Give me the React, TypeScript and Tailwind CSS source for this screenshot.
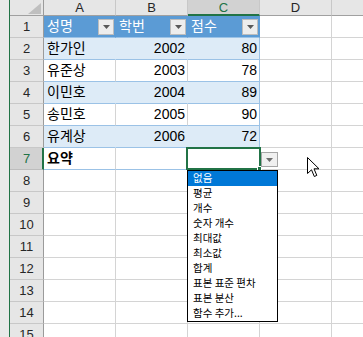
import React from "react";

const FONT = "font-['Liberation_Sans','Noto_Sans_CJK_KR',sans-serif]";

const people = [
  { name: "한가인", id: "2002", score: "80" },
  { name: "유준상", id: "2003", score: "78" },
  { name: "이민호", id: "2004", score: "89" },
  { name: "송민호", id: "2005", score: "90" },
  { name: "유계상", id: "2006", score: "72" },
];

const options = [
  "없음",
  "평균",
  "개수",
  "숫자 개수",
  "최대값",
  "최소값",
  "합계",
  "표본 표준 편차",
  "표본 분산",
  "함수 추가...",
];

const Arrow = ({ color = "#595959" }: { color?: string }) => (
  <svg width="7" height="4" viewBox="0 0 7 4">
    <polygon points="0,0 7,0 3.5,4" fill={color} />
  </svg>
);

const FilterButton = () => (
  <div className="mr-px flex h-[16px] w-[16px] items-center justify-center border border-[#bdbdbd] bg-[#ededed]">
    <Arrow />
  </div>
);

function RowHead({ n, active }: { n: number; active?: boolean }) {
  return (
    <div
      className={
        active
          ? "flex w-[34px] shrink-0 items-center justify-center border-r-2 border-b border-r-[#217346] border-b-[#bdbdbd] bg-[#d2d2d2] pl-px text-[13px] text-[#217346]"
          : "flex w-[34px] shrink-0 items-center justify-center border-r border-b border-r-[#9b9b9b] border-b-[#c8c8c8] bg-[#e6e6e6] text-[13px] text-[#262626]"
      }
    >
      {n}
    </div>
  );
}

const Empty = ({ wide }: { wide?: boolean }) => (
  <div
    className={
      wide
        ? "flex-1 border-b border-[#d4d4d4] bg-white"
        : "w-[72px] shrink-0 border-r border-b border-[#d4d4d4] bg-white"
    }
  />
);

function SummaryPopup() {
  return (
    <>
      {/* selection frame */}
      <div className="absolute -left-[2px] -top-px z-10 h-[23px] w-[75px] border-2 border-[#217346]" />
      <div className="absolute left-[69px] top-[18px] z-20 h-[5px] w-[5px] border border-white bg-[#217346]" />
      {/* dropdown button */}
      <div className="absolute left-[73px] top-[4px] z-20 flex h-[15px] w-[17px] items-center justify-center border border-[#a6a6a6] bg-[#f0f0f0]">
        <Arrow color="#6d6d6d" />
      </div>
      {/* list */}
      <div className="absolute -left-px top-[22px] z-30 w-[91px] border border-black bg-white font-['Noto_Sans_CJK_KR',sans-serif] text-[10.5px] text-black">
        {options.map((o, i) => (
          <div
            key={o}
            className={
              i === 0
                ? "flex h-[15px] items-center bg-[#0078d7] pl-[5px] leading-none text-white"
                : "flex h-[15px] items-center pl-[5px] leading-none"
            }
          >
            {o}
          </div>
        ))}
      </div>
    </>
  );
}

export default function App() {
  const colHead =
    "flex w-[72px] shrink-0 items-center justify-center border-r border-b border-r-[#c8c8c8] border-b-[#a0a0a0] bg-[#e6e6e6] text-[13px] text-[#262626]";

  return (
    <div className={`flex h-[337px] w-[363px] overflow-hidden bg-white ${FONT} text-[14px] text-black`}>
      {/* window edge */}
      <div className="w-[9px] shrink-0 bg-[#e9e9e9]" />
      <div className="w-px shrink-0 bg-[#217346]" />

      <div className="relative flex min-w-0 flex-1 flex-col">
        {/* column headers */}
        <div className="flex h-[16px] shrink-0">
          <div className="flex w-[34px] shrink-0 items-end justify-end border-r border-b border-r-[#9b9b9b] border-b-[#a0a0a0] bg-[#e6e6e6] pb-px pr-[2px]">
            <svg width="13" height="11" viewBox="0 0 13 11">
              <polygon points="13,0 13,11 0,11" fill="#bfbfbf" />
            </svg>
          </div>
          <div className={colHead}>A</div>
          <div className={colHead}>B</div>
          <div className="flex w-[72px] shrink-0 items-center justify-center border-r border-b-2 border-r-[#c8c8c8] border-b-[#217346] bg-[#d2d2d2] pt-px text-[13px] text-[#217346]">
            C
          </div>
          <div className={colHead}>D</div>
          <div className="flex flex-1 items-center justify-center border-b border-b-[#a0a0a0] bg-[#e6e6e6]" />
        </div>

        {/* row 1: table header */}
        <div className="flex h-[22px] shrink-0">
          <RowHead n={1} />
          {["성명", "학번", "점수"].map((h, i) => (
            <div
              key={h}
              className={
                i === 2
                  ? "flex w-[72px] shrink-0 items-center justify-between border-r border-b border-r-[#5b9bd5] border-b-[#9bc2e6] bg-[#5b9bd5] pl-[3px] text-white"
                  : "flex w-[72px] shrink-0 items-center justify-between border-r border-b border-r-[#5b9bd5] border-b-[#9bc2e6] bg-[#5b9bd5] pl-[3px] text-white"
              }
            >
              <span>{h}</span>
              <FilterButton />
            </div>
          ))}
          <Empty />
          <Empty wide />
        </div>

        {/* rows 2-6: data */}
        {people.map((p, i) => {
          const banded = i % 2 === 0;
          const cell = banded
            ? "flex w-[72px] shrink-0 items-center border-r border-b border-r-[#ddebf7] border-b-[#9bc2e6] bg-[#ddebf7]"
            : "flex w-[72px] shrink-0 items-center border-r border-b border-r-[#d4d4d4] border-b-[#9bc2e6] bg-white";
          const last = banded
            ? "flex w-[72px] shrink-0 items-center justify-end border-r border-b border-[#9bc2e6] bg-[#ddebf7] pr-[2px]"
            : "flex w-[72px] shrink-0 items-center justify-end border-r border-b border-[#9bc2e6] bg-white pr-[2px]";
          return (
            <div key={p.id} className="flex h-[22px] shrink-0">
              <RowHead n={i + 2} />
              <div className={`${cell} pl-[3px]`}>{p.name}</div>
              <div className={`${cell} justify-end pr-[2px]`}>{p.id}</div>
              <div className={last}>{p.score}</div>
              <Empty />
              <Empty wide />
            </div>
          );
        })}

        {/* row 7: summary */}
        <div className="flex h-[22px] shrink-0">
          <RowHead n={7} active />
          <div className="flex w-[72px] shrink-0 items-center border-r border-b border-r-[#d4d4d4] border-b-[#9bc2e6] pl-[3px] font-bold">
            요약
          </div>
          <div className="w-[72px] shrink-0 border-r border-b border-r-[#d4d4d4] border-b-[#9bc2e6]" />
          <div className="relative w-[72px] shrink-0 border-r border-b border-r-[#d4d4d4] border-b-[#9bc2e6]">
            <SummaryPopup />
          </div>
          <Empty />
          <Empty wide />
        </div>

        {/* rows 8-15 */}
        {[8, 9, 10, 11, 12, 13, 14, 15].map((n) => (
          <div key={n} className="flex h-[22px] shrink-0">
            <RowHead n={n} />
            <Empty />
            <Empty />
            <Empty />
            <Empty />
            <Empty wide />
          </div>
        ))}

        {/* mouse pointer */}
        <svg
          className="absolute left-[297px] top-[157px] z-40"
          width="13"
          height="21"
          viewBox="0 0 13 21"
        >
          <path
            d="M0.5 0.5 L0.5 16.5 L4.5 12.8 L7.3 19.5 L9.8 18.4 L7 11.8 L12 11.8 Z"
            fill="white"
            stroke="black"
            strokeWidth="1"
            strokeLinejoin="miter"
          />
        </svg>
      </div>
    </div>
  );
}
